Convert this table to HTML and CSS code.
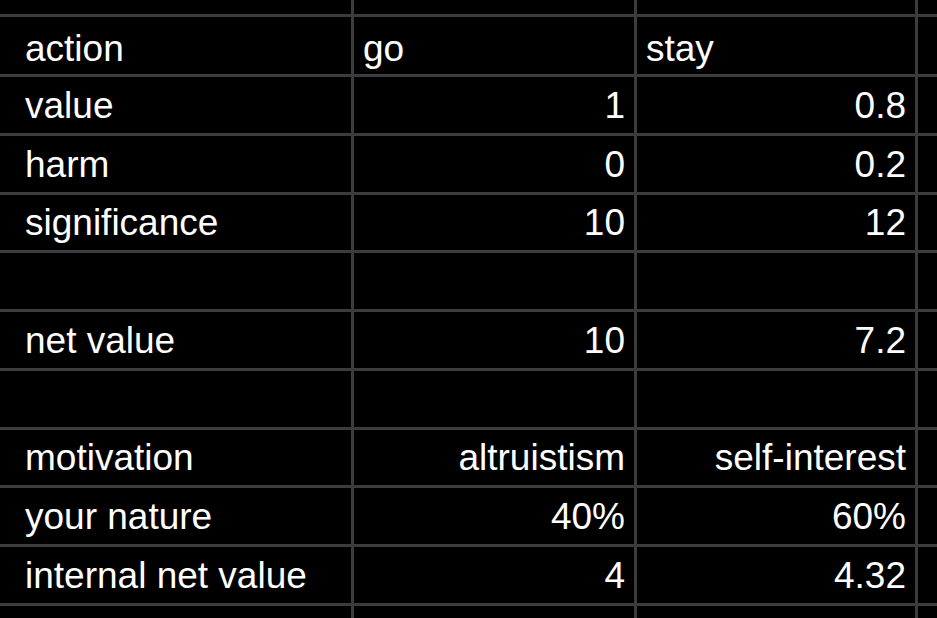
FILE: index.html
```html
<!DOCTYPE html>
<html lang="en">
<head>
<meta charset="utf-8">
<title>Sheet</title>
<link rel="stylesheet" href="styles.css">
</head>
<body>
<div class="sheet">
  <div class="c"></div><div class="c"></div><div class="c"></div><div class="c"></div><div class="c"></div>

  <div class="c"></div><div class="c h">action</div><div class="c h">go</div><div class="c h">stay</div><div class="c"></div>

  <div class="c"></div><div class="c">value</div><div class="c r">1</div><div class="c r">0.8</div><div class="c"></div>

  <div class="c"></div><div class="c">harm</div><div class="c r">0</div><div class="c r">0.2</div><div class="c"></div>

  <div class="c"></div><div class="c">significance</div><div class="c r">10</div><div class="c r">12</div><div class="c"></div>

  <div class="c"></div><div class="c"></div><div class="c"></div><div class="c"></div><div class="c"></div>

  <div class="c"></div><div class="c">net value</div><div class="c r">10</div><div class="c r">7.2</div><div class="c"></div>

  <div class="c"></div><div class="c"></div><div class="c"></div><div class="c"></div><div class="c"></div>

  <div class="c"></div><div class="c">motivation</div><div class="c r">altruistism</div><div class="c r">self-interest</div><div class="c"></div>

  <div class="c"></div><div class="c">your nature</div><div class="c r">40%</div><div class="c r">60%</div><div class="c"></div>

  <div class="c"></div><div class="c">internal net value</div><div class="c r">4</div><div class="c r">4.32</div><div class="c"></div>

  <div class="c"></div><div class="c"></div><div class="c"></div><div class="c"></div><div class="c"></div>
</div>
</body>
</html>
```

FILE: styles.css
```css
html, body {
  margin: 0;
  padding: 0;
  background: #000;
  overflow: hidden;
}

.sheet {
  width: 100vw;
  height: 100vh;
  display: grid;
  grid-template-columns: 13px 335px 280px 278px 1fr;
  grid-template-rows: 14px 57px 56px 56px 55px 56px 56px 56px 55px 56px 56px 1fr;
  gap: 3px;
  background: #3c3c3f;
  font-family: "Liberation Sans", Arial, sans-serif;
  font-size: 37px;
  color: #fff;
}

.c {
  background: #000;
  display: flex;
  align-items: flex-end;
  justify-content: flex-start;
  padding: 0 9px 6px 9px;
  white-space: nowrap;
  overflow: hidden;
  min-width: 0;
}

.h {
  padding-bottom: 4px;
}

.r {
  justify-content: flex-end;
}
```
